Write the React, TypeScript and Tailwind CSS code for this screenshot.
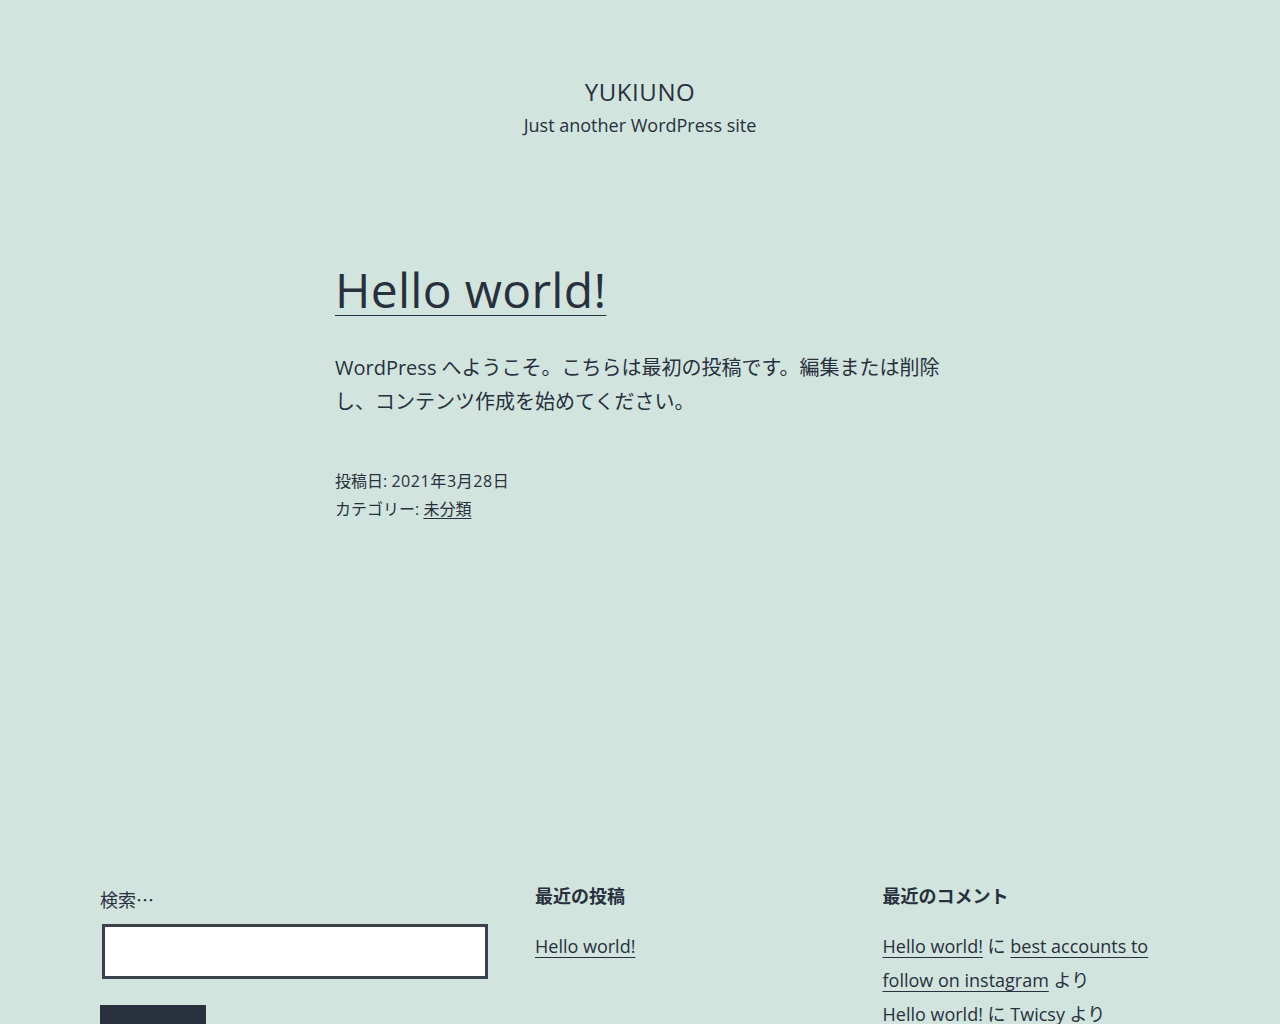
import React from "react";

export default function App() {
  const font = { fontFamily: '"Open Sans", "Noto Sans CJK JP", sans-serif' };
  return (
    <div className="min-h-[1024px] w-full bg-[#d1e4dd] text-[#28303d] overflow-hidden" style={font}>
      {/* header */}
      <header className="flex flex-col items-center pt-[77px]">
        <div className="text-[24px] leading-[30px] uppercase tracking-[0.6px]">YUKIUNO</div>
        <div className="mt-[5px] text-[18px] leading-[26px]">Just another WordPress site</div>
      </header>

      {/* entry */}
      <main className="mx-auto w-[610px] pt-[123px]">
        <h2 className="text-[48px] leading-[58px] font-normal tracking-[0.3px]">
          <a className="underline decoration-1 underline-offset-[7px]">Hello world!</a>
        </h2>
        <p className="mt-[32px] text-[20px] leading-[34px]">
          WordPress へようこそ。こちらは最初の投稿です。編集または削除し、コンテンツ作成を始めてください。
        </p>
        <div className="mt-[48px] text-[16px] leading-[28px]">
          <div>
            投稿日: <span className="tracking-[0.6px]">2021年3月28日</span>
          </div>
          <div>
            カテゴリー: <a className="underline decoration-1 underline-offset-[3px]">未分類</a>
          </div>
        </div>
      </main>

      {/* widgets */}
      <footer className="mt-[360px] px-[100px] grid grid-cols-[385px_1fr_1fr] gap-x-[50px]">
        <div className="pt-[3px]">
          <div className="text-[18px] leading-[26px]" style={{ fontFamily: '"Noto Sans CJK JP", sans-serif' }}>
            検索…
          </div>
          <div className="mt-[12px] ml-[2px] h-[55px] w-[386px] border-[3px] border-[#39414d] bg-white" />
          <div className="mt-[26px] h-[40px] w-[106px] bg-[#28303d]" />
        </div>
        <div>
          <h2 className="text-[18px] leading-[26px] font-bold">最近の投稿</h2>
          <ul className="mt-[20px] text-[18px] leading-[34px]">
            <li>
              <a className="underline decoration-1 underline-offset-[4px]">Hello world!</a>
            </li>
          </ul>
        </div>
        <div>
          <h2 className="text-[18px] leading-[26px] font-bold">最近のコメント</h2>
          <ul className="mt-[20px] text-[18px] leading-[34px]">
            <li>
              <a className="underline decoration-1 underline-offset-[4px]">Hello world!</a> に{" "}
              <a className="underline decoration-1 underline-offset-[4px]">best accounts to follow on instagram</a> より
            </li>
            <li>
              <a>Hello world!</a> に <a>Twicsy</a> より
            </li>
          </ul>
        </div>
      </footer>
    </div>
  );
}
